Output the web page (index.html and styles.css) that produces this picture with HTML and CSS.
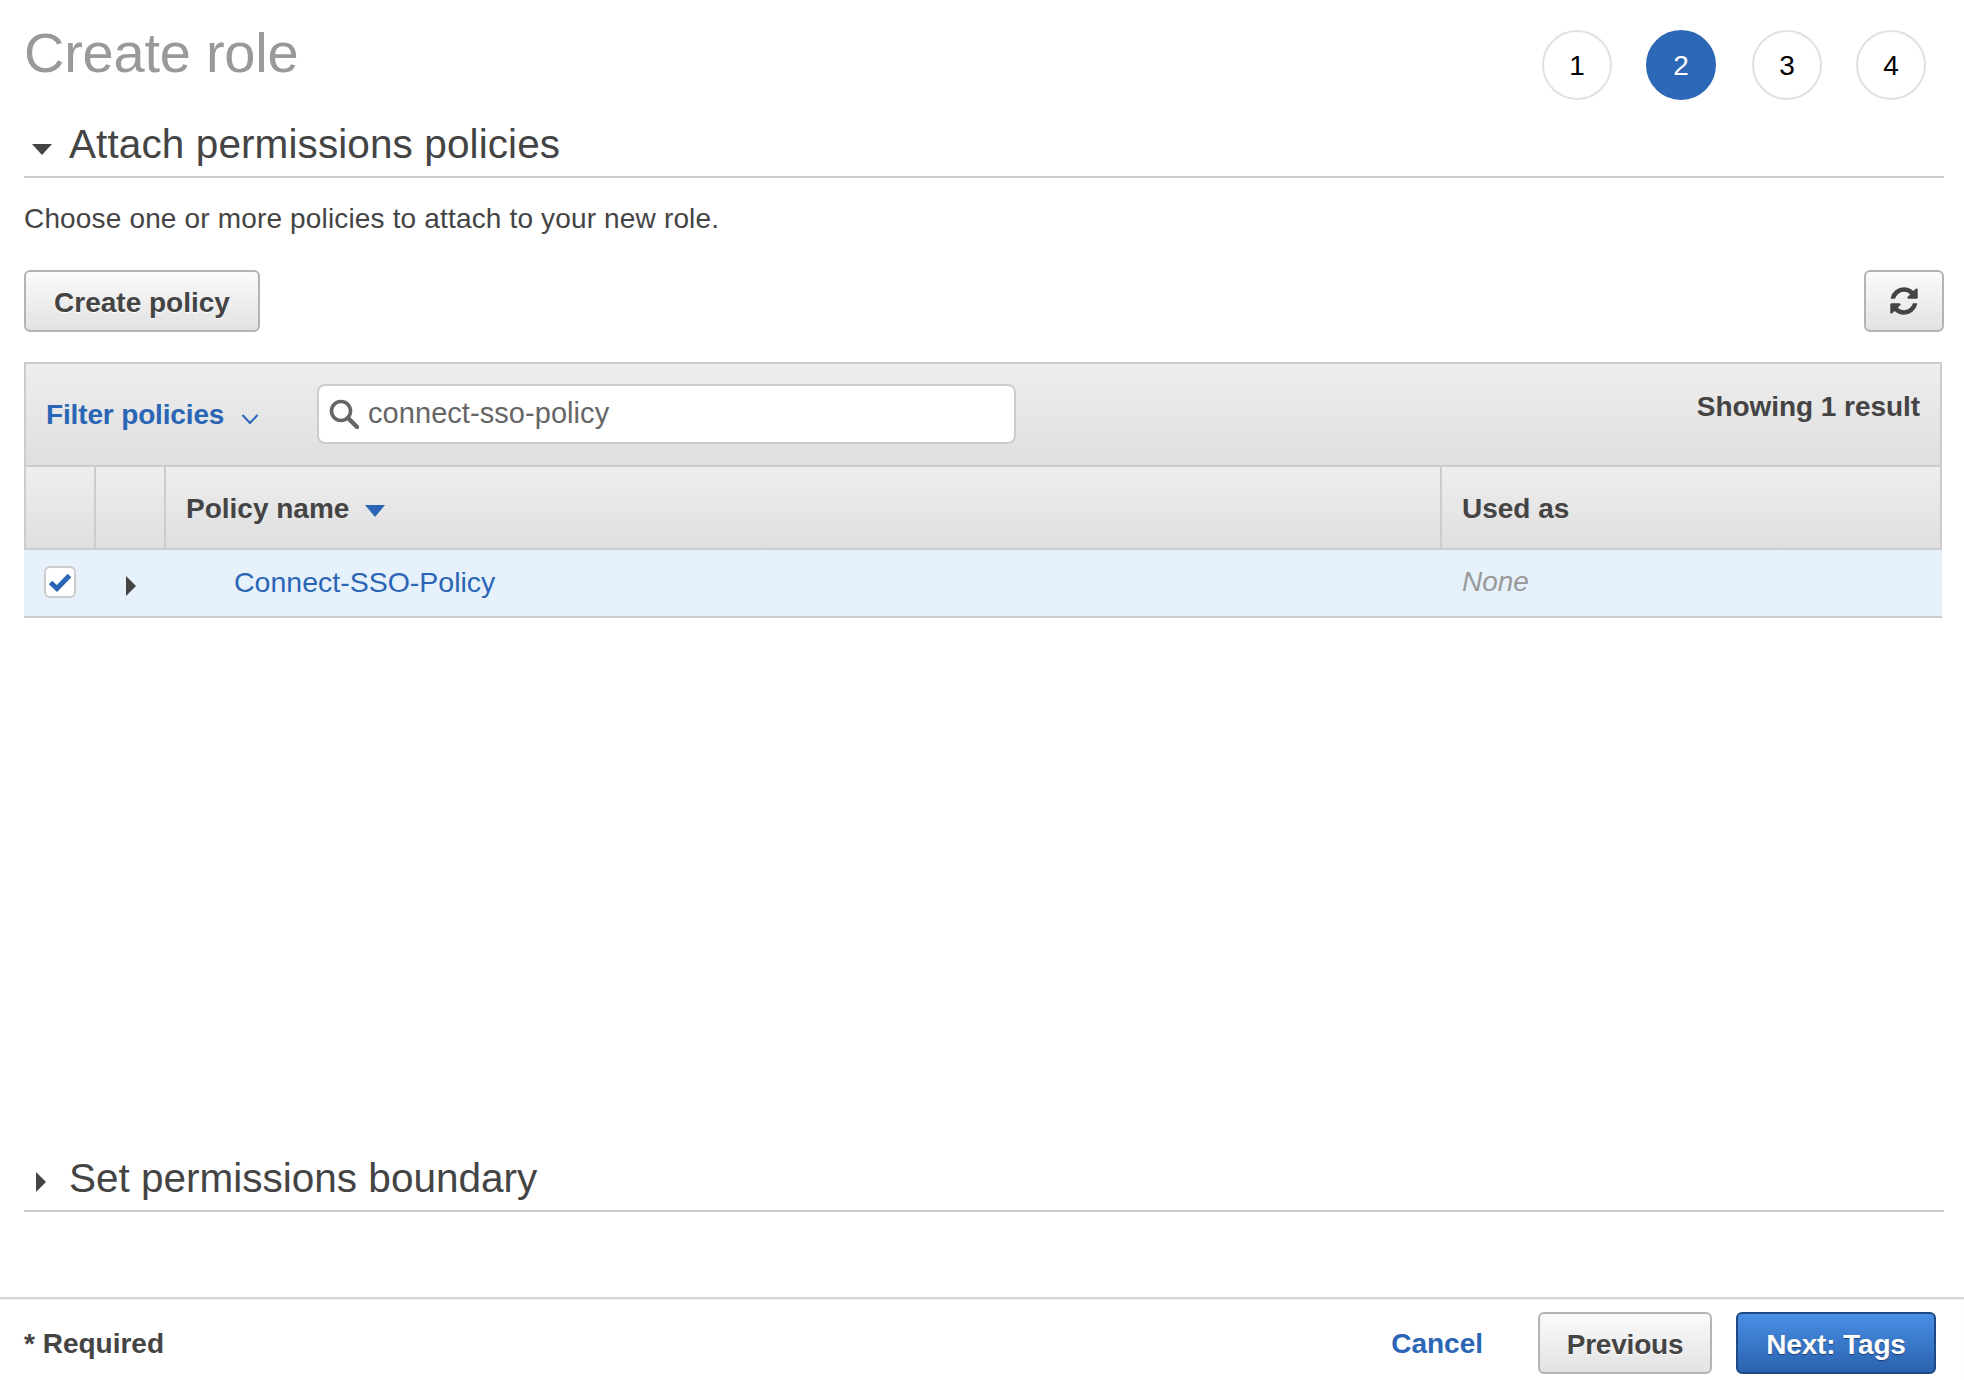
FILE: index.html
```html
<!DOCTYPE html>
<html>
<head>
    <title>Create role</title>
    <link rel="stylesheet" href="styles.css">
</head>
<body>
    <div class="page">
        <div class="top">
            <h1>Create role</h1>
            <div class="steps">
                <span class="step">1</span>
                <span class="step active">2</span>
                <span class="step">3</span>
                <span class="step">4</span>
            </div>
        </div>

        <div class="section-head open">
            <span class="caret-down"></span>
            <h2>Attach permissions policies</h2>
        </div>
        <p class="intro">Choose one or more policies to attach to your new role.</p>

        <div class="actions">
            <button type="button" class="btn create">Create policy</button>
            <button type="button" class="btn refresh" aria-label="Refresh">
                <svg viewBox="0 0 1792 1792" width="32" height="32"><path fill="#444" d="M1639 1056q0 5-1 7-64 268-268 434.5t-478 166.5q-146 0-282.5-55t-243.5-157l-129 129q-19 19-45 19t-45-19-19-45v-448q0-26 19-45t45-19h448q26 0 45 19t19 45-19 45l-137 137q71 66 161 102t187 36q134 0 250-65t186-179q11-17 53-117 8-23 30-23h192q13 0 22.5 9.5t9.5 22.5zm25-800v448q0 26-19 45t-45 19h-448q-26 0-45-19t-19-45 19-45l138-138q-148-137-349-137-134 0-250 65t-186 179q-11 17-53 117-8 23-30 23h-199q-13 0-22.5-9.5t-9.5-22.5v-7q65-268 270-434.5t480-166.5q146 0 284 55.5t245 156.5l130-129q19-19 45-19t45 19 19 45z"/></svg>
            </button>
        </div>

        <div class="policies">
            <div class="filter-bar">
                <a class="filter-link">Filter policies
                    <svg viewBox="0 0 18 12" width="18" height="12"><path d="M1.5 2 9 10l7.5-8" fill="none" stroke="#2a66b5" stroke-width="2"/></svg>
                </a>
                <div class="search">
                    <svg viewBox="0 0 30 30" width="30" height="30"><circle cx="12" cy="12" r="9.5" fill="none" stroke="#666" stroke-width="3.6"/><path d="M19 19l9 9" stroke="#666" stroke-width="4.4" stroke-linecap="round"/></svg>
                    <span>connect-sso-policy</span>
                </div>
                <div class="result-count">Showing 1 result</div>
            </div>
            <div class="table-row head">
                <div class="cell check"></div>
                <div class="cell expand"></div>
                <div class="cell name">Policy name <span class="sort"></span></div>
                <div class="cell used">Used as</div>
            </div>
            <div class="table-row selected">
                <div class="cell check">
                    <span class="checkbox">
                        <svg viewBox="0 0 24 20" width="24" height="20"><path d="M2.5 10.5 9 16.5 21.5 3.5" fill="none" stroke="#2a66b5" stroke-width="5"/></svg>
                    </span>
                </div>
                <div class="cell expand"><span class="caret-right small"></span></div>
                <div class="cell name"><a class="policy-link">Connect-SSO-Policy</a></div>
                <div class="cell used"><em>None</em></div>
            </div>
        </div>

        <div class="section-head closed">
            <span class="caret-right"></span>
            <h2>Set permissions boundary</h2>
        </div>

        <div class="footer">
            <span class="required">* Required</span>
            <a class="cancel">Cancel</a>
            <button type="button" class="btn previous">Previous</button>
            <button type="button" class="btn primary">Next: Tags</button>
        </div>
    </div>
</body>
</html>
```

FILE: styles.css
```css
* { box-sizing: border-box; }
body { margin: 0; background: #fff; color: #444; font-family: "Liberation Sans", Arial, sans-serif; font-size: 28px; overflow: hidden; }
.page { height: 1380px; display: flex; flex-direction: column; padding: 0 20px 0 24px; }

.top { display: flex; justify-content: space-between; height: 116px; padding-top: 30px; padding-right: 18px; }
h1 { margin: 0; font-size: 56px; line-height: 46px; font-weight: 400; color: #999; letter-spacing: -0.25px; }
.steps { display: flex; gap: 34px; }
.step { width: 70px; height: 70px; padding-top: 2px; border: 2px solid #e1e1e1; border-radius: 50%; display: flex; align-items: center; justify-content: center; color: #000; font-size: 28px; }
.step.active { margin-right: 2px; background: #2d68b7; border-color: #2d68b7; color: #fff; }

.section-head { display: flex; align-items: center; height: 62px; border-bottom: 2px solid #ccc; }
.section-head.open h2 { letter-spacing: 0.1px; }
h2 { margin: 0; padding-bottom: 5px; font-size: 40.5px; font-weight: 400; color: #444; line-height: 46px; }
.caret-down { width: 0; height: 0; margin: 6px 17px 0 8px; border-left: 10px solid transparent; border-right: 10px solid transparent; border-top: 11px solid #444; }
.caret-right { width: 0; height: 0; margin: 4px 23px 0 12px; border-top: 10px solid transparent; border-bottom: 10px solid transparent; border-left: 10px solid #444; }
.caret-right.small { margin: 7px 0 0 0; }

.intro { margin: 22px 0 0; line-height: 38px; color: #444; letter-spacing: 0.16px; }

.actions { display: flex; justify-content: space-between; margin-top: 32px; }
.btn { height: 62px; padding: 3px 0 0; border: 2px solid #b4b4b4; border-radius: 6px; background: linear-gradient(#fbfbfb, #e2e2e2); color: #444; font: bold 28px "Liberation Sans", Arial, sans-serif; text-shadow: 0 1px 1px #fff; }
.create { width: 236px; }
.refresh { width: 80px; padding: 0; display: flex; align-items: center; justify-content: center; }

.policies { margin: 30px 2px 0 0; }
.filter-bar { display: flex; align-items: center; height: 103px; border: 2px solid #ccc; border-bottom: none; background: linear-gradient(#eee, #dfdfdf); }
.filter-link { width: 291px; padding-left: 20px; color: #2a66b5; font-weight: bold; white-space: nowrap; letter-spacing: -0.15px; }
.filter-link svg { margin-left: 9px; vertical-align: -1px; }
.search { display: flex; align-items: center; gap: 9px; width: 699px; height: 60px; margin-top: -2px; padding-left: 10px; border: 2px solid #ccc; border-radius: 8px; background: #fff; color: #666; font-size: 29px; letter-spacing: 0.06px; }
.result-count { margin: -16px 20px 0 auto; font-weight: bold; letter-spacing: -0.05px; }

.table-row { display: flex; }
.table-row.head { height: 85px; border: 2px solid #ccc; background: linear-gradient(#eee, #dfdfdf); font-weight: bold; }
.table-row.head .cell { padding-top: 3px; border-right: 2px solid #ccc; }
.table-row.head .cell:last-child { border-right: none; }
.table-row.selected { height: 68px; padding-bottom: 2px; border-bottom: 2px solid #ccc; background: #e6f1fc; }
.cell { display: flex; align-items: center; }
.check { width: 70px; padding-left: 20px; }
.expand { width: 70px; padding-left: 30px; }
.table-row.selected .check { width: 72px; }
.name { width: 1276px; padding-left: 20px; }
.table-row.selected .name { padding-left: 68px; }
.used { flex: 1; padding-left: 20px; }
.used em { color: #999; }
.policy-link { color: #2a66b5; font-size: 28.5px; }
.sort { width: 0; height: 0; margin: 4px 0 0 16px; border-left: 10px solid transparent; border-right: 10px solid transparent; border-top: 12px solid #2a66b5; }
.checkbox { display: flex; align-items: center; justify-content: center; width: 32px; height: 32px; border: 2px solid #ccc; border-radius: 6px; background: #fff; }

.section-head.closed { margin-top: 532px; }

.footer { display: flex; align-items: flex-start; margin: auto -20px 0 -24px; height: 83px; padding: 13px 28px 0 24px; border-top: 2px solid #d5d5d5; box-shadow: inset 0 1px 1px #eee; }
.required { margin: 16px auto 0 0; font-weight: bold; }
.cancel { margin: 16px 55px 0 0; color: #2a66b5; font-weight: bold; }
.previous { width: 174px; letter-spacing: -0.2px; }
.primary { width: 200px; margin-left: 24px; border-color: #1f4a85; background: linear-gradient(#4a8fe6, #2a62ae); color: #fff; text-shadow: 0 1px 1px #1d3f70; letter-spacing: -0.15px; }
```
